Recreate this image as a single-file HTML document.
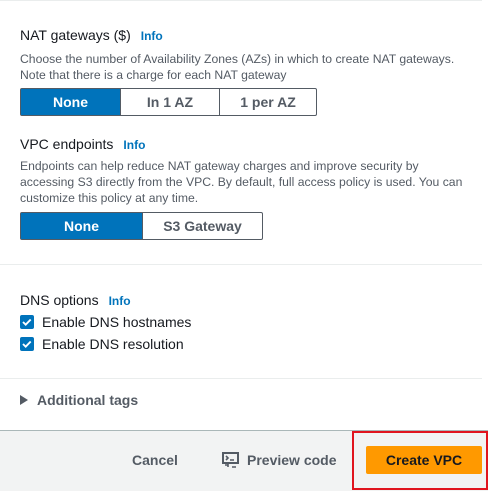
<!DOCTYPE html>
<html><head><style>
*{margin:0;padding:0;box-sizing:border-box}
body{width:488px;height:491px;background:#fff;font-family:"Liberation Sans",Arial,sans-serif;color:#16191f;position:relative;overflow:hidden}
.a{position:absolute}
.t{font-size:14px;white-space:nowrap}
.info{color:#0073bb;font-weight:bold;font-size:12px;margin-left:10px}
.d{font-size:12.2px;color:#545b64;line-height:16px;white-space:nowrap}
.seg{display:flex;height:28px;border:1px solid #545b64;border-radius:2px}
.seg div{display:flex;align-items:center;justify-content:center;font-weight:bold;font-size:14px;color:#545b64;border-left:1px solid #545b64}
.seg div.on{background:#0073bb;color:#fff;border-left:none}
.line{height:1px;background:#eaeded;left:0;width:482px}
.cb{width:14px;height:14px;background:#0073bb;border-radius:2px}
</style></head><body>
<div class="a line" style="top:0"></div>
<div class="a t" style="left:20px;top:27px">NAT gateways ($)<span class="info">Info</span></div>
<div class="a d" style="left:20px;top:51px">Choose the number of Availability Zones (AZs) in which to create NAT gateways.<br>Note that there is a charge for each NAT gateway</div>
<div class="a seg" style="left:20px;top:88px;width:297px">
<div class="on" style="width:99px">None</div><div style="width:99px">In 1 AZ</div><div style="width:97px">1 per AZ</div></div>
<div class="a t" style="left:20px;top:136px">VPC endpoints<span class="info">Info</span></div>
<div class="a d" style="left:20px;top:158px">Endpoints can help reduce NAT gateway charges and improve security by<br>accessing S3 directly from the VPC. By default, full access policy is used. You can<br>customize this policy at any time.</div>
<div class="a seg" style="left:20px;top:212px;width:243px">
<div class="on" style="width:121px">None</div><div style="width:120px">S3 Gateway</div></div>
<div class="a line" style="top:264px"></div>
<div class="a t" style="left:20px;top:292px">DNS options<span class="info">Info</span></div>
<div class="a cb" style="left:20px;top:315px"><svg width="14" height="14"><path d="M3 7l2.7 2.7 5-5.2" stroke="#fff" stroke-width="1.9" fill="none"/></svg></div>
<div class="a t" style="left:42px;top:314px">Enable DNS hostnames</div>
<div class="a cb" style="left:20px;top:337px"><svg width="14" height="14"><path d="M3 7l2.7 2.7 5-5.2" stroke="#fff" stroke-width="1.9" fill="none"/></svg></div>
<div class="a t" style="left:42px;top:336px">Enable DNS resolution</div>
<div class="a line" style="top:378px"></div>
<div class="a" style="left:20px;top:395px;width:0;height:0;border-left:8px solid #545b64;border-top:5px solid transparent;border-bottom:5px solid transparent"></div>
<div class="a t" style="left:37px;top:392px;font-weight:bold;color:#545b64">Additional tags</div>
<div class="a" style="left:0;top:430px;width:488px;height:61px;background:#f2f3f3;border-top:1px solid #aab7b8"></div>
<div class="a t" style="left:132px;top:452px;font-weight:bold;color:#545b64">Cancel</div>
<svg class="a" style="left:222px;top:452px" width="17" height="16"><rect x="1" y="1" width="15" height="10" fill="none" stroke="#545b64" stroke-width="2"/><path d="M4 4l2 2-2 2M8 8h4M6 11v4M3 13h3M10 15h4" stroke="#545b64" stroke-width="1.6" fill="none"/></svg>
<div class="a t" style="left:247px;top:452px;font-weight:bold;color:#545b64">Preview code</div>
<div class="a" style="left:366px;top:446px;width:116px;height:28px;background:#ff9900;border-radius:2px;font-weight:bold;font-size:14px;display:flex;align-items:center;justify-content:center;color:#16191f">Create VPC</div>
<div class="a" style="left:352px;top:431px;width:136px;height:59px;border:2px solid #e0141e"></div>
</body></html>
